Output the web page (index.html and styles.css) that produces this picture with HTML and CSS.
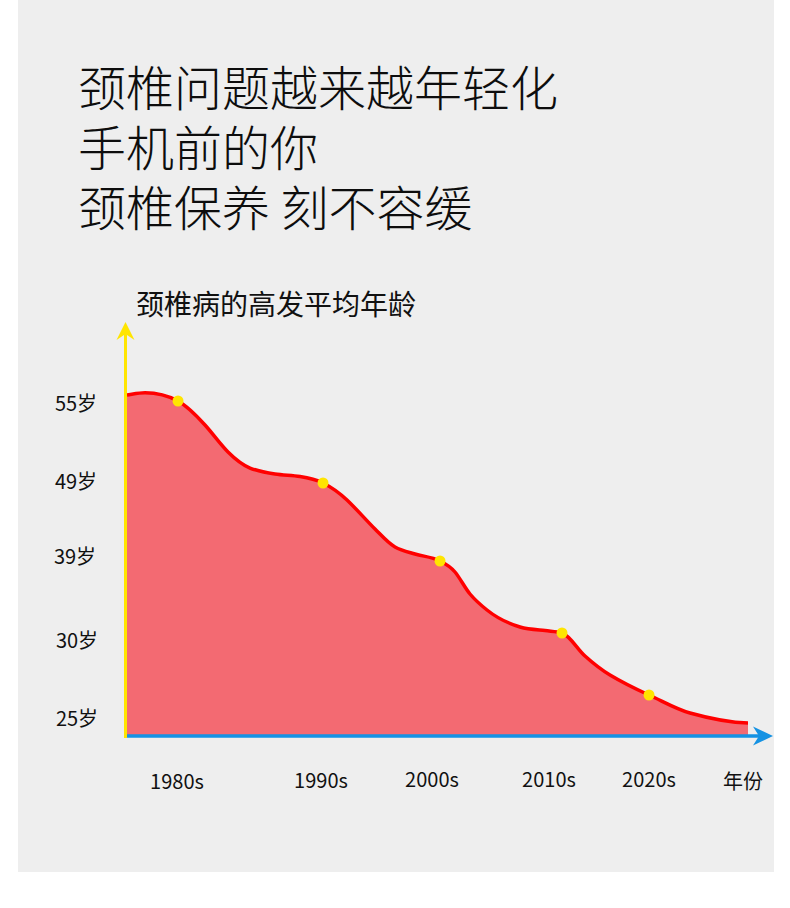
FILE: index.html
```html
<!DOCTYPE html>
<html lang="zh-CN">
<head>
<meta charset="utf-8">
<title>颈椎问题越来越年轻化</title>
<link rel="stylesheet" href="styles.css">
</head>
<body>
<div class="panel">
  <h1 class="headline">
    <span class="line">颈椎问题越来越年轻化</span>
    <span class="line">手机前的你</span>
    <span class="line">颈椎保养 刻不容缓</span>
  </h1>
  <h2 class="subtitle">颈椎病的高发平均年龄</h2>
  <svg class="chart" viewBox="18 317 756 500" width="756" height="500" xmlns="http://www.w3.org/2000/svg">
    <path class="area" d="M127,395 C133,394.1 139,392.7 145,392.7 C156,392.7 167,394.95 178,401 C187,405.95 196,415.1 205,425 C212.67,433.43 220.33,444.33 228,452 C235.33,459.33 242.67,465.07 250,468 C258.33,471.33 266.67,472.75 275,474 C283.33,475.25 291.67,475.25 300,476.5 C307.67,477.65 315.33,479.17 323,483 C331,487 339,492.4 347,500 C356.33,508.87 365.67,519.67 375,529 C381.67,535.67 388.33,543.33 395,547 C401.67,550.67 408.33,552 415,554 C423.33,556.5 431.67,556.83 440,561 C445,563.5 450,566 455,572 C460,578 465,588 470,594 C475.67,600.8 481.33,605.47 487,610 C498,618.8 509,623.7 520,627 C528.33,629.5 536.67,629.67 545,630.5 C550.67,631.35 556.33,631.3 562,633 C569.67,635.3 577.33,649.1 585,656 C593.33,663.5 601.67,670 610,675 C623,682.8 636,689.15 649,695 C662.67,701.15 676.33,709.17 690,713 C709.33,718.41 728.67,722.61 748,723 L748,735 L127,735 Z"/>
    <path class="curve" d="M127,395 C133,394.1 139,392.7 145,392.7 C156,392.7 167,394.95 178,401 C187,405.95 196,415.1 205,425 C212.67,433.43 220.33,444.33 228,452 C235.33,459.33 242.67,465.07 250,468 C258.33,471.33 266.67,472.75 275,474 C283.33,475.25 291.67,475.25 300,476.5 C307.67,477.65 315.33,479.17 323,483 C331,487 339,492.4 347,500 C356.33,508.87 365.67,519.67 375,529 C381.67,535.67 388.33,543.33 395,547 C401.67,550.67 408.33,552 415,554 C423.33,556.5 431.67,556.83 440,561 C445,563.5 450,566 455,572 C460,578 465,588 470,594 C475.67,600.8 481.33,605.47 487,610 C498,618.8 509,623.7 520,627 C528.33,629.5 536.67,629.67 545,630.5 C550.67,631.35 556.33,631.3 562,633 C569.67,635.3 577.33,649.1 585,656 C593.33,663.5 601.67,670 610,675 C623,682.8 636,689.15 649,695 C662.67,701.15 676.33,709.17 690,713 C709.33,718.41 728.67,722.61 748,723"/>
    <line class="x-axis" x1="124" y1="736" x2="762" y2="736"/>
    <path class="x-arrow" d="M773,736 L753,726.5 L759,736 L753,745.5 Z"/>
    <line class="y-axis" x1="125.5" y1="738" x2="125.5" y2="332"/>
    <path class="y-arrow" d="M125.5,322 L116.5,340 L125.5,334 L134.5,340 Z"/>
    <circle class="dot" cx="178" cy="401" r="5.5"/>
    <circle class="dot" cx="323" cy="483" r="5.5"/>
    <circle class="dot" cx="440" cy="561" r="5.5"/>
    <circle class="dot" cx="562" cy="633" r="5.5"/>
    <circle class="dot" cx="649" cy="695" r="5.5"/>
    <g class="y-labels">
      <text x="76" y="411">55岁</text>
      <text x="76" y="489">49岁</text>
      <text x="75" y="564">39岁</text>
      <text x="77" y="648">30岁</text>
      <text x="77" y="726">25岁</text>
    </g>
    <g class="x-labels">
      <text x="177" y="789">1980s</text>
      <text x="321" y="788">1990s</text>
      <text x="432" y="787">2000s</text>
      <text x="549" y="787">2010s</text>
      <text x="649" y="787">2020s</text>
      <text x="743" y="789">年份</text>
    </g>
  </svg>
</div>
</body>
</html>
```
FILE: styles.css
```css
html, body {
  margin: 0;
  padding: 0;
  background: #ffffff;
}

body {
  font-family: "Noto Sans CJK SC", "Noto Sans", sans-serif;
  color: #111111;
}

.panel {
  width: 756px;
  height: 872px;
  margin-left: 18px;
  background: #eeeeee;
  box-sizing: border-box;
  padding-top: 55px;
  overflow: hidden;
}

.headline {
  margin: 0;
  padding-left: 60px;
  font-size: 48px;
  line-height: 60px;
  font-weight: 300;
  color: #0d0d0d;
  display: flex;
  flex-direction: column;
}

.line {
  display: block;
  white-space: pre;
}

.subtitle {
  margin: 54px 0 0 0;
  padding-left: 118px;
  font-size: 28px;
  line-height: 28px;
  font-weight: 400;
  color: #111111;
}

.chart {
  display: block;
  overflow: visible;
}

.area {
  fill: #f36a72;
  stroke: none;
}

.curve {
  fill: none;
  stroke: #ff0000;
  stroke-width: 3.5;
  stroke-linecap: butt;
}

.x-axis {
  stroke: #1592e3;
  stroke-width: 3.5;
}

.x-arrow {
  fill: #1592e3;
}

.y-axis {
  stroke: #ffe500;
  stroke-width: 3;
}

.y-arrow {
  fill: #ffe500;
}

.dot {
  fill: #ffe500;
}

.y-labels text,
.x-labels text {
  font-family: "Noto Sans CJK SC", "Noto Sans", sans-serif;
  font-size: 20px;
  fill: #111111;
  text-anchor: middle;
}
```
